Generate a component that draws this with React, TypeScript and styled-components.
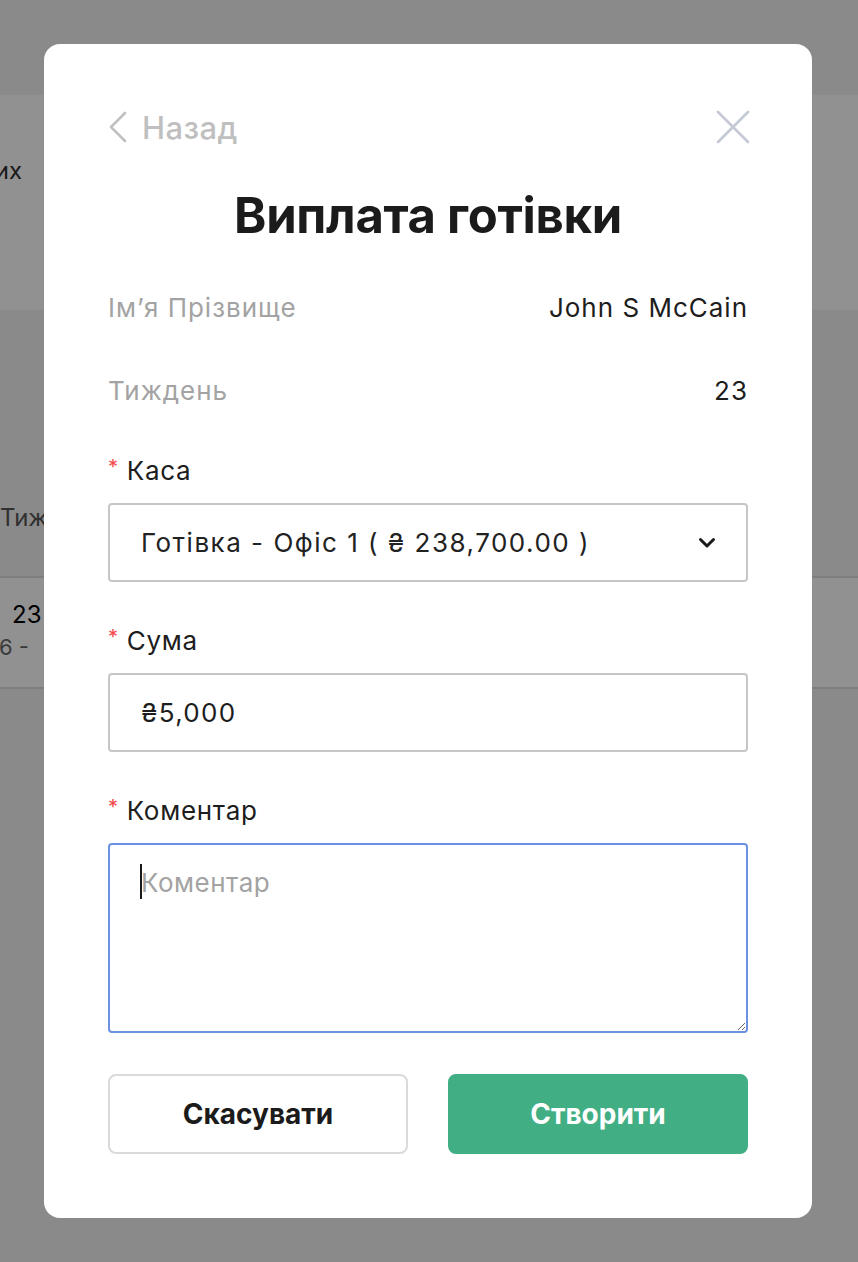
import React from 'react';
import styled, { createGlobalStyle } from 'styled-components';

const GlobalStyle = createGlobalStyle`
  html, body { margin: 0; padding: 0; }
  body { font-family: Inter, "Noto Sans", "Liberation Sans", sans-serif; background: #f3f3f3; }
  * { box-sizing: border-box; }
`;

/* ---------- background page (under the overlay) ---------- */
const Page = styled.div`
  width: 858px;
  height: 1262px;
  overflow: hidden;
  background: #f3f3f3;
  display: flex;
  flex-direction: column;
`;

const SummaryCard = styled.div`
  margin-top: 95px;
  height: 215px;
  background: #ffffff;
  padding-top: 60px;
`;

const ClipRight = styled.div<{ $w: number }>`
  width: ${(p) => p.$w}px;
  overflow: hidden;
  display: flex;
  justify-content: flex-end;
  white-space: nowrap;
`;

const BgText = styled.span<{ $color?: string; $size?: number; $indent?: number }>`
  font-size: ${(p) => p.$size ?? 24}px;
  line-height: 32px;
  color: ${(p) => p.$color ?? '#333'};
  padding-left: ${(p) => p.$indent ?? 0}px;
  white-space: nowrap;
`;

const TableHead = styled.div`
  height: 268px;
  display: flex;
  flex-direction: column;
  justify-content: flex-end;
  padding-bottom: 42px;
  border-bottom: 2px solid #dedede;
`;

const TableRow = styled.div`
  height: 111px;
  background: #ffffff;
  border-bottom: 2px solid #dedede;
  display: flex;
  flex-direction: column;
  justify-content: center;
  padding-bottom: 4px;
`;

/* ---------- overlay & modal ---------- */
const Overlay = styled.div`
  position: fixed;
  inset: 0;
  background: rgba(0, 0, 0, 0.43);
  display: flex;
  justify-content: flex-start;
  align-items: flex-start;
  padding: 44px 0 0 44px;
`;

const Modal = styled.div`
  width: 768px;
  height: 1174px;
  background: #ffffff;
  border-radius: 16px;
  padding: 64px 64px 0;
  display: flex;
  flex-direction: column;
`;

const Header = styled.div`
  height: 38px;
  display: flex;
  align-items: center;
  justify-content: space-between;
`;

const BackLink = styled.button`
  border: 0;
  background: none;
  padding: 0;
  display: flex;
  align-items: center;
  gap: 14px;
  font-family: inherit;
  font-size: 31px;
  font-weight: 500;
  letter-spacing: 0.4px;
  color: #bfbfbf;
  cursor: pointer;
`;

const CloseButton = styled.button`
  border: 0;
  background: none;
  padding: 0;
  margin-right: -2px;
  display: flex;
  cursor: pointer;
`;

const Title = styled.h1`
  margin: 45px 0 0;
  font-size: 49px;
  line-height: 50px;
  font-weight: 700;
  text-align: center;
  color: #1b1b1b;
  letter-spacing: -0.3px;
`;

const InfoRow = styled.div<{ $top: number }>`
  margin-top: ${(p) => p.$top}px;
  height: 32px;
  display: flex;
  align-items: center;
  justify-content: space-between;
  font-size: 26px;
  letter-spacing: 1px;
`;

const InfoLabel = styled.span`
  color: #a3a3a3;
`;

const InfoValue = styled.span`
  color: #1d1d1d;
`;

const FieldLabel = styled.label<{ $top: number }>`
  margin-top: ${(p) => p.$top}px;
  height: 32px;
  display: flex;
  align-items: center;
  font-size: 26px;
  letter-spacing: 0.7px;
  color: #1d1d1d;
`;

const Required = styled.span`
  color: #f5474b;
  font-size: 20px;
  margin-right: 8px;
  align-self: flex-start;
  line-height: 26px;
`;

const SelectBox = styled.div`
  margin-top: 17px;
  height: 79px;
  border: 2px solid #c6c6c6;
  border-radius: 4px;
  padding: 0 30px 0 31px;
  display: flex;
  align-items: center;
  justify-content: space-between;
  font-size: 26px;
  color: #222;
  letter-spacing: 1.5px;
`;

const TextInput = styled.input`
  margin-top: 17px;
  height: 79px;
  border: 2px solid #c6c6c6;
  border-radius: 4px;
  padding: 0 31px;
  font-family: inherit;
  font-size: 26px;
  letter-spacing: 1.3px;
  color: #1d1d1d;
  outline: none;
`;

const AreaWrap = styled.div`
  margin-top: 17px;
  position: relative;
  display: flex;
`;

const TextArea = styled.textarea`
  width: 100%;
  height: 190px;
  border: 2px solid #6b90e4;
  border-radius: 4px;
  padding: 22px 31px;
  font-family: inherit;
  font-size: 26px;
  letter-spacing: 0.5px;
  line-height: 32px;
  color: #1d1d1d;
  outline: none;
  &::placeholder {
    color: #a3a3a3;
  }
`;

const Caret = styled.span`
  position: absolute;
  left: 32px;
  top: 21px;
  width: 2px;
  height: 35px;
  background: #1a1a1a;
`;

const Buttons = styled.div`
  margin-top: 41px;
  display: grid;
  grid-template-columns: 1fr 1fr;
  gap: 40px;
`;

const Button = styled.button<{ $primary?: boolean }>`
  height: 80px;
  border-radius: 8px;
  border: 2px solid ${(p) => (p.$primary ? '#41ae84' : '#dadada')};
  background: ${(p) => (p.$primary ? '#41ae84' : '#ffffff')};
  color: ${(p) => (p.$primary ? '#ffffff' : '#1b1b1b')};
  font-family: inherit;
  font-size: 28px;
  font-weight: 700;
  cursor: pointer;
`;

export default function App() {
  return (
    <>
      <GlobalStyle />
      <Page>
        <SummaryCard>
          <ClipRight $w={22}>
            <BgText $color="#2e2e2e">Активних</BgText>
          </ClipRight>
        </SummaryCard>
        <TableHead>
          <BgText $color="#555">Тиждень</BgText>
        </TableHead>
        <TableRow>
          <BgText $color="#000" $indent={12}>
            23
          </BgText>
          <ClipRight $w={29}>
            <BgText $color="#666" $size={22}>
              16 -
            </BgText>
          </ClipRight>
        </TableRow>
      </Page>

      <Overlay>
        <Modal>
          <Header>
            <BackLink>
              <svg width="20" height="32" viewBox="0 0 20 32" fill="none">
                <polyline
                  points="17,2 3,16 17,30"
                  stroke="#c0c0c0"
                  strokeWidth="2.6"
                  strokeLinecap="round"
                  strokeLinejoin="round"
                />
              </svg>
              Назад
            </BackLink>
            <CloseButton aria-label="close">
              <svg width="34" height="34" viewBox="0 0 34 34" fill="none">
                <path
                  d="M2 2 L32 32 M32 2 L2 32"
                  stroke="#c5c9d6"
                  strokeWidth="2.6"
                  strokeLinecap="round"
                />
              </svg>
            </CloseButton>
          </Header>

          <Title>Виплата готівки</Title>

          <InfoRow $top={50}>
            <InfoLabel>Ім’я Прізвище</InfoLabel>
            <InfoValue>John S McCain</InfoValue>
          </InfoRow>
          <InfoRow $top={51}>
            <InfoLabel>Тиждень</InfoLabel>
            <InfoValue>23</InfoValue>
          </InfoRow>

          <FieldLabel $top={48}>
            <Required>*</Required>Каса
          </FieldLabel>
          <SelectBox>
            <span>Готівка - Офіс 1 ( ₴ 238,700.00 )</span>
            <svg width="18" height="12" viewBox="0 0 18 12" fill="none">
              <polyline
                points="2.5,2.5 9,9 15.5,2.5"
                stroke="#1a1a1a"
                strokeWidth="3"
                strokeLinecap="round"
                strokeLinejoin="round"
              />
            </svg>
          </SelectBox>

          <FieldLabel $top={42}>
            <Required>*</Required>Сума
          </FieldLabel>
          <TextInput defaultValue="₴5,000" readOnly />

          <FieldLabel $top={42}>
            <Required>*</Required>Коментар
          </FieldLabel>
          <AreaWrap>
            <TextArea placeholder="Коментар" />
            <Caret />
          </AreaWrap>

          <Buttons>
            <Button>Скасувати</Button>
            <Button $primary>Створити</Button>
          </Buttons>
        </Modal>
      </Overlay>
    </>
  );
}
